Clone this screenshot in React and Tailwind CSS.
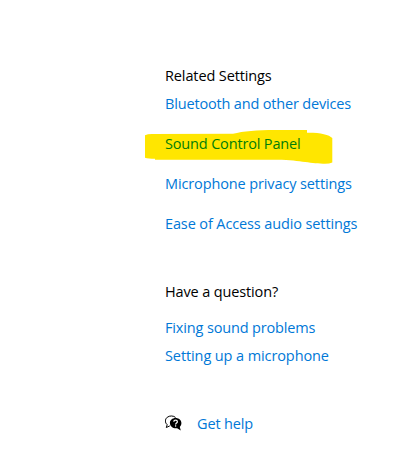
import React from "react";

const relatedLinks = [
  { label: "Bluetooth and other devices", tracking: "tracking-[-0.17px]" },
  {
    label: "Sound Control Panel",
    tracking: "tracking-[-0.16px]",
    highlighted: true,
  },
  { label: "Microphone privacy settings", tracking: "tracking-[-0.12px]" },
  { label: "Ease of Access audio settings", tracking: "tracking-[-0.12px]" },
];

const helpLinks = [
  { label: "Fixing sound problems", tracking: "tracking-[-0.15px]" },
  { label: "Setting up a microphone", tracking: "tracking-[-0.1px]" },
];

const Marker = () => (
  <svg
    className="absolute -left-5 -top-[3px]"
    width="188"
    height="36"
    viewBox="0 0 188 36"
    fill="#ffe600"
  >
    <path d="M-.5 6.500 Q2 5 7 5 L88 4.800 C98 2.200 112 1 130 1 L162 1 V3.700 C175 3.500 184 5.500 187.300 9 V33.500 Q184 35 178 34.700 C164 34.500 154 30.800 128 30.800 H10 V29.700 C5 29.700 2 29.500 -.5 28.500 Z" />
  </svg>
);

const HelpIcon = () => (
  <svg width="18" height="18" viewBox="0 0 18 18" fill="none">
    <path
      d="M1.300 12.500 L2.200 9.700 C-.3 7.600 -.1 4.200 2.200 2.300 C4.600 .4 8.600 .6 10.600 2.500 M1.300 12.500 L4.800 10.900"
      stroke="#000"
      strokeWidth="1"
    />
    <path
      d="M10.600 2.900 C14 2.900 16.400 5.100 16.400 8 C16.400 9.700 15.800 10.900 14.800 11.900 L15.800 15.600 L12.100 13.300 C8.100 13.800 4.900 11.400 4.900 8 C4.900 5.100 7.300 2.900 10.600 2.900 Z"
      fill="#000"
    />
    <path
      d="M8.800 6.700 C8.800 4.600 12.400 4.600 12.400 6.700 C12.400 8 10.600 8 10.600 9.500"
      stroke="#fff"
      strokeWidth="1.200"
    />
    <rect x="10" y="10.300" width="1.200" height="1.300" fill="#fff" />
  </svg>
);

const SettingLink = ({ label, tracking, highlighted }) => (
  <a
    href="#"
    className={`relative block h-6 w-fit whitespace-nowrap ${tracking} ${
      highlighted ? "text-[#007d08]" : "text-[#0078d7]"
    }`}
  >
    {highlighted && <Marker />}
    <span className="relative">{label}</span>
  </a>
);

const App = () => {
  return (
    <div className="h-[454px] w-[419px] overflow-hidden bg-white pl-[165px] pt-16 font-['Open_Sans','Noto_Sans',sans-serif] text-[14.5px] leading-6 text-black">
      {/* Related settings */}
      <section>
        <h2 className="mb-1 w-fit tracking-[-0.12px]">Related Settings</h2>
        <nav className="flex flex-col gap-4">
          {relatedLinks.map((link) => (
            <SettingLink key={link.label} {...link} />
          ))}
        </nav>
      </section>

      {/* Help */}
      <section className="mt-11">
        <h2 className="mb-3 w-fit tracking-[-0.14px]">Have a question?</h2>
        <nav className="flex flex-col gap-1">
          {helpLinks.map((link) => (
            <SettingLink key={link.label} {...link} />
          ))}
        </nav>
      </section>

      <div className="mt-11 flex h-6 items-center gap-[14px]">
        <HelpIcon />
        <SettingLink label="Get help" tracking="tracking-[-0.15px]" />
      </div>
    </div>
  );
};

export default App;
